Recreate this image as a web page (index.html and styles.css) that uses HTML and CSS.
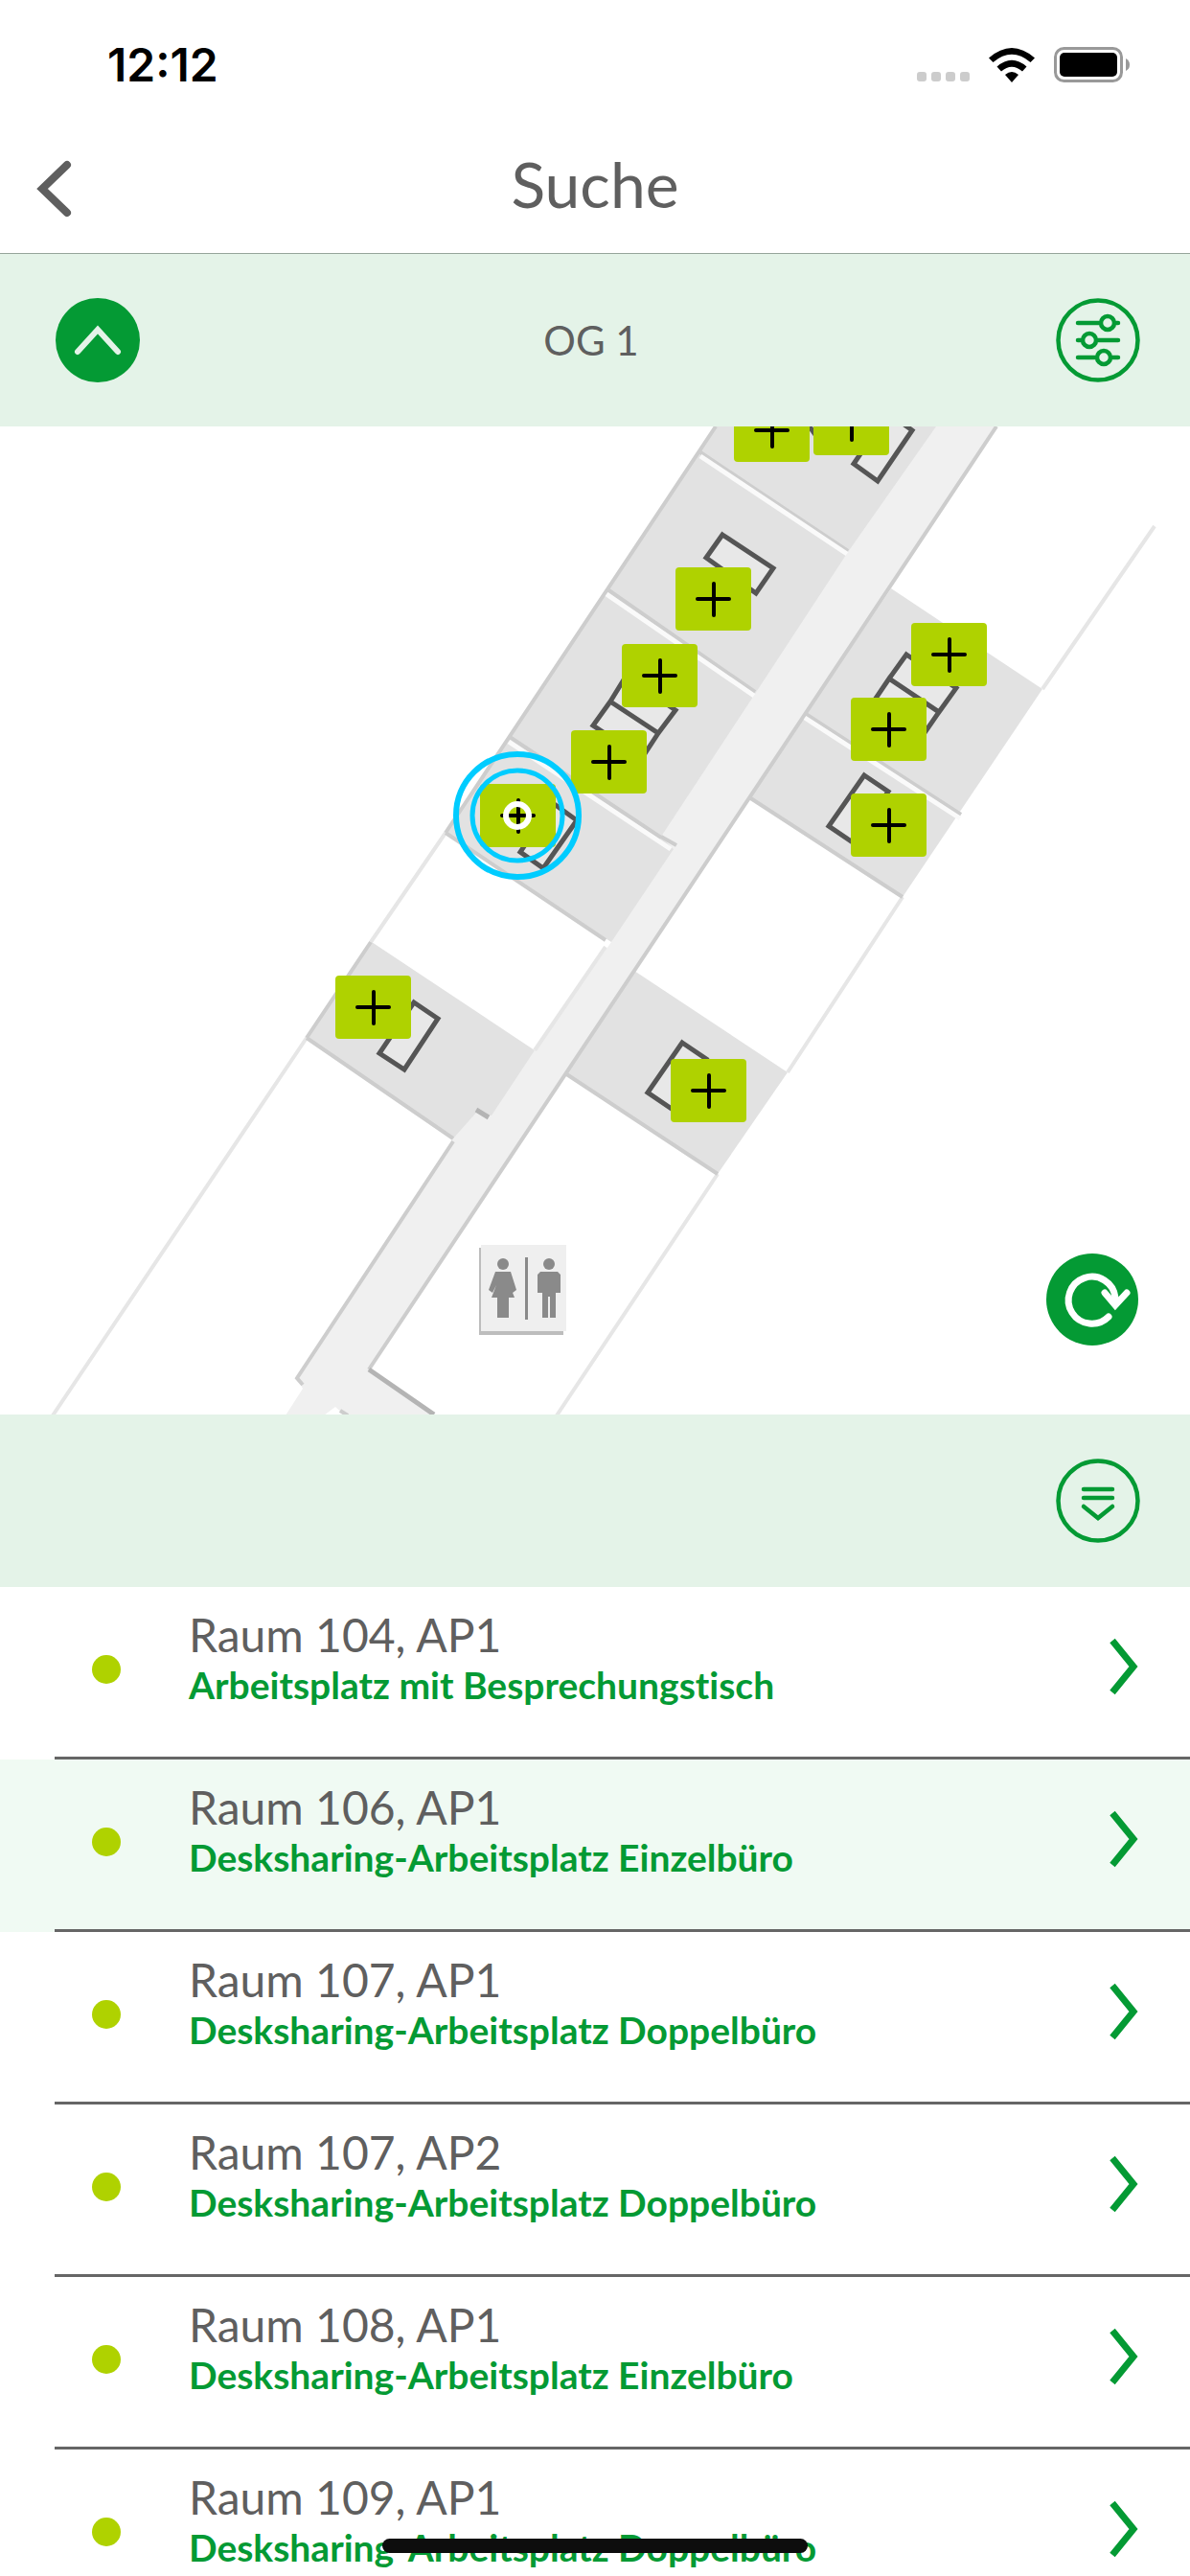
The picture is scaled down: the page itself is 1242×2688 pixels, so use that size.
FILE: index.html
```html
<!DOCTYPE html>
<html lang="de">
<head>
<meta charset="utf-8">
<meta name="viewport" content="width=device-width, initial-scale=1">
<title>Suche</title>
<link rel="stylesheet" href="styles.css">
</head>
<body>
<div class="app">
  <div class="status">
    <span class="status-time">12:12</span>
    <div class="status-icons">
      <div class="signal"><i></i><i></i><i></i><i></i></div>
      <svg class="wifi" width="48" height="37" viewBox="0 0 48 37" aria-hidden="true">
        <path d="M0 10.500Q24-10.500 48 10.500L43.500 15Q24-1.500 4.500 15Z"/>
        <path d="M8.500 19.500Q24 6 39.500 19.500L35 24.500Q24 15 13 24.500Z"/>
        <path d="M17 28Q24 22 31 28L24 36Z"/>
      </svg>
      <svg class="battery" width="80" height="38" viewBox="0 0 80 38" aria-hidden="true">
        <rect x="1.500" y="1.500" width="69" height="34" rx="9" fill="none" stroke="#999" stroke-width="3"/>
        <rect x="6" y="6" width="60" height="25" rx="5"/>
        <path d="M75 12Q79 14 79 18.500T75 25Z" fill="#999"/>
      </svg>
    </div>
  </div>

  <header class="header">
    <button class="back" type="button" aria-label="Zurück">
      <svg width="38" height="62" viewBox="0 0 38 62"><path d="M33 6L7 31L33 56"/></svg>
    </button>
    <h1>Suche</h1>
  </header>

  <div class="bar">
    <button class="round" type="button" aria-label="Etage wechseln">
      <svg width="88" height="88" viewBox="0 0 88 88"><circle cx="44" cy="44" r="44" fill="#049a34"/><path d="M23 56L44 33L65 56" fill="none" stroke="#e4f3e8" stroke-width="6" stroke-linecap="round"/></svg>
    </button>
    <span class="bar-title">OG 1</span>
    <button class="round" type="button" aria-label="Filter">
      <svg width="88" height="88" viewBox="0 0 88 88" fill="none" stroke="#049a34" stroke-width="4.500" stroke-linecap="round">
        <circle cx="44" cy="44" r="41.500"/>
        <path d="M23 26H45M63 26H65M23 44H26M44 44H65M23 62H41M59 62H65"/>
        <circle cx="54" cy="26" r="7"/><circle cx="35" cy="44" r="7"/><circle cx="50" cy="62" r="7"/>
      </svg>
    </button>
  </div>

  <main class="map">
    <svg class="plan" width="1242" height="1032" viewBox="0 444 1242 1032" aria-label="Grundriss">
      <path class="corridor" d="M960 444H1040L385 1428L453 1473V1476H360L350 1467L338 1476H298L316 1448L310 1437L473 1187L480 1150L558 1095L638 982L680 870Z"/>
      <g class="room">
        <path d="M747 444H977L885 575L788 723L690 872L703 885L638 982L465 868Z"/>
        <path d="M388 982L558 1095L513 1163L497 1160L473 1187L320 1082Z"/>
        <path d="M930 613L1088 718L942 935L782 831Z"/>
        <path d="M662 1012L822 1118L749 1224L590 1119Z"/>
      </g>
      <g class="faint">
        <path d="M465 868L387 982M320 1082L55 1476M1205 548L1088 718M942 935L822 1118M749 1224L581 1476"/>
        <path d="M632 987L558 1095"/>
      </g>
      <g class="wall">
        <path d="M747 444L465 868M387 982L320 1082M1040 444L385 1428"/>
        <path d="M465 868L632 980M320 1082L473 1187M782 831L942 935M590 1119L749 1224"/>
        <path d="M473 1190L310 1437L316 1444"/>
        <path d="M690 872L706 881"/>
        <path class="dark" d="M497 1157L510 1165M385 1428L453 1475"/>
        <path d="M355 1471L363 1476"/>
      </g>
      <g class="wall"><path d="M731 471L885 574M634 614L788 721M532 768L690 873M841 744L1003 849"/></g>
      <path class="gap" d="M731 475L884 577M633 619L787 725M531 773L700 885M840 748L1002 853"/>
      <g class="desk">
        <path d="M952 448L916 501L891 483L927 430Z"/>
        <path d="M842 440L852 454"/>
        <path d="M754 557L807 592L789 618L737 581Z"/>
        <path d="M637 731L653 705L705 740L687 764ZM637 731L687 764L670 790L619 756Z"/>
        <path d="M577 837L602 855L567 905L543 888Z"/>
        <path d="M432 1045L457 1062L422 1115L396 1098Z"/>
        <path d="M712 1087L737 1104L701 1156L676 1139Z"/>
        <path d="M946 682L998 717L980 742L928 707ZM928 707L980 742L962 768L911 732Z"/>
        <path d="M902 808L927 825L890 878L865 861Z"/>
      </g>
      <g>
        <path d="M500 1301H588V1392H500Z" fill="#bdbdbd"/>
        <path d="M502 1298H591V1388H502Z" fill="#efefef"/>
        <g fill="#8a8a8a">
          <circle cx="525" cy="1318" r="6"/>
          <path d="M517 1326H533L539 1345L535 1348L532 1340L537 1353H531V1374H519V1353H513L518 1340L514 1348L510 1345Z"/>
          <path d="M548 1311H551V1376H548Z"/>
          <circle cx="573" cy="1318" r="6"/>
          <path d="M564 1326H582L585 1329V1348H580V1374H574V1352H572V1374H566V1348H561V1329Z"/>
        </g>
      </g>
    </svg>

    <button class="pin" type="button" aria-label="Arbeitsplatz" style="left:766px;top:-29px"></button>
    <button class="pin" type="button" aria-label="Arbeitsplatz" style="left:849px;top:-36px"></button>
    <button class="pin" type="button" aria-label="Arbeitsplatz" style="left:705px;top:147px"></button>
    <button class="pin" type="button" aria-label="Arbeitsplatz" style="left:649px;top:227px"></button>
    <button class="pin" type="button" aria-label="Arbeitsplatz" style="left:596px;top:317px"></button>
    <button class="pin" type="button" aria-label="Arbeitsplatz" style="left:350px;top:573px"></button>
    <button class="pin" type="button" aria-label="Arbeitsplatz" style="left:700px;top:660px"></button>
    <button class="pin" type="button" aria-label="Arbeitsplatz" style="left:951px;top:205px"></button>
    <button class="pin" type="button" aria-label="Arbeitsplatz" style="left:888px;top:283px"></button>
    <button class="pin" type="button" aria-label="Arbeitsplatz" style="left:888px;top:383px"></button>
    <button class="pin" type="button" aria-label="Ausgewählter Arbeitsplatz" style="left:501px;top:373px">
      <svg class="target" width="136" height="136" viewBox="0 0 136 136" fill="none">
        <circle cx="68" cy="68" r="64" stroke="#00ccff" stroke-width="6"/>
        <circle cx="68" cy="68" r="47" stroke="#00ccff" stroke-width="5"/>
        <circle cx="68" cy="68" r="12" stroke="#fff" stroke-width="6"/>
      </svg>
    </button>

    <button class="reload" type="button" aria-label="Neu laden">
      <svg width="96" height="96" viewBox="0 0 96 96" fill="none" stroke="#fff" stroke-width="7" stroke-linecap="round">
        <circle cx="48" cy="48" r="48" fill="#049a34" stroke="none"/>
        <path d="M65 66A24.500 24.500 0 1 1 72 46"/>
        <path d="M61 41L72 54L84 41"/>
      </svg>
    </button>
  </main>

  <div class="bar bar-end">
    <button class="round" type="button" aria-label="Liste einklappen">
      <svg width="88" height="88" viewBox="0 0 88 88" fill="none" stroke="#049a34" stroke-width="4.500" stroke-linecap="round">
        <circle cx="44" cy="44" r="41.500"/>
        <path d="M29 32H59M29 41H59M29 50L44 62L59 50"/>
      </svg>
    </button>
  </div>

  <ul class="list">
    <li><a href="#raum-104-1"><span class="dot"></span><span class="text"><span class="name">Raum 104, AP1</span><span class="kind">Arbeitsplatz mit Besprechungstisch</span></span><svg class="go" width="30" height="60" viewBox="0 0 30 60"><path d="M3 3L25 30L3 57"/></svg></a></li>
    <li class="active"><a href="#raum-106-1"><span class="dot"></span><span class="text"><span class="name">Raum 106, AP1</span><span class="kind">Desksharing-Arbeitsplatz Einzelbüro</span></span><svg class="go" width="30" height="60" viewBox="0 0 30 60"><path d="M3 3L25 30L3 57"/></svg></a></li>
    <li><a href="#raum-107-1"><span class="dot"></span><span class="text"><span class="name">Raum 107, AP1</span><span class="kind">Desksharing-Arbeitsplatz Doppelbüro</span></span><svg class="go" width="30" height="60" viewBox="0 0 30 60"><path d="M3 3L25 30L3 57"/></svg></a></li>
    <li><a href="#raum-107-2"><span class="dot"></span><span class="text"><span class="name">Raum 107, AP2</span><span class="kind">Desksharing-Arbeitsplatz Doppelbüro</span></span><svg class="go" width="30" height="60" viewBox="0 0 30 60"><path d="M3 3L25 30L3 57"/></svg></a></li>
    <li><a href="#raum-108-1"><span class="dot"></span><span class="text"><span class="name">Raum 108, AP1</span><span class="kind">Desksharing-Arbeitsplatz Einzelbüro</span></span><svg class="go" width="30" height="60" viewBox="0 0 30 60"><path d="M3 3L25 30L3 57"/></svg></a></li>
    <li><a href="#raum-109-1"><span class="dot"></span><span class="text"><span class="name">Raum 109, AP1</span><span class="kind">Desksharing-Arbeitsplatz Doppelbüro</span></span><svg class="go" width="30" height="60" viewBox="0 0 30 60"><path d="M3 3L25 30L3 57"/></svg></a></li>
  </ul>
  <div class="home"></div>
</div>
</body>
</html>
```
FILE: styles.css
```css
* {
  box-sizing: border-box;
}

body {
  margin: 0;
  background: #fff;
  color: #5f5f5f;
  font-family: Lato, "Liberation Sans", sans-serif;
  font-variant-ligatures: none;
}

button {
  padding: 0;
  border: 0;
  background: none;
  cursor: pointer;
}

svg {
  display: block;
}

.app {
  display: flex;
  flex-direction: column;
  height: 100vh;
  overflow: hidden;
}

.app > * {
  flex-shrink: 0;
}

/* status bar */
.status {
  display: flex;
  justify-content: space-between;
  align-items: center;
  height: 136px;
  padding: 0 62px 0 112px;
}

.status-time {
  color: #000;
  font: 600 48px/56px Inter, "Liberation Sans", sans-serif;
}

.status-icons {
  display: flex;
  align-items: flex-end;
  gap: 20px;
}

.signal {
  display: flex;
  gap: 5px;
  padding-bottom: 2px;
}

.signal i {
  width: 10px;
  height: 10px;
  border-radius: 3px;
  background: #ccc;
}

/* header */
.header {
  display: grid;
  grid-template-columns: 120px 1fr 120px;
  align-items: center;
  height: 129px;
  padding-bottom: 16px;
  border-bottom: 1px solid #96a59b;
}

.header h1 {
  margin: 0;
  font-size: 66px;
  font-weight: 400;
  line-height: 80px;
  text-align: center;
}

.back {
  justify-self: start;
  padding: 10px 37px 0;
}

.back path {
  fill: none;
  stroke: #5f5f5f;
  stroke-width: 8;
  stroke-linecap: round;
}

/* green bars */
.bar {
  display: flex;
  justify-content: space-between;
  align-items: center;
  height: 180px;
  padding: 0 52px 0 58px;
  background: #e4f3e8;
}

.bar-end {
  justify-content: flex-end;
}

.bar-title {
  padding-right: 14px;
  font-size: 42px;
  line-height: 50px;
}

/* floor map */
.map {
  position: relative;
  height: 1031px;
  overflow: hidden;
}

.corridor {
  fill: #f0f0f0;
}

.room {
  fill: #e2e2e2;
}

.faint {
  fill: none;
  stroke: #e6e6e6;
  stroke-width: 4;
}

.wall {
  fill: none;
  stroke: #cdcdcd;
  stroke-width: 4;
}

.wall .dark {
  stroke: #b4b4b4;
  stroke-width: 5;
}

.gap {
  fill: none;
  stroke: #fafafa;
  stroke-width: 5;
}

.desk {
  fill: #e8e8e8;
  stroke: #555;
  stroke-width: 5;
}

.pin {
  position: absolute;
  display: grid;
  place-items: center;
  width: 79px;
  height: 66px;
  border-radius: 4px;
  background: #afd200;
}

.pin::before,
.pin::after {
  content: "";
  grid-area: 1 / 1;
  width: 37px;
  height: 4px;
  border-radius: 2px;
  background: #000;
}

.pin::after {
  width: 4px;
  height: 37px;
}

.target {
  position: absolute;
  left: -29px;
  top: -35px;
}

.reload {
  position: absolute;
  right: 54px;
  bottom: 72px;
}

/* workplace list */
.list {
  flex: 1 1 0;
  min-height: 0;
  margin: 0;
  padding: 0;
  list-style: none;
  overflow-y: auto;
  scrollbar-width: none;
}

.active {
  background: #f0faf3;
}

.list a {
  display: flex;
  align-items: flex-start;
  height: 180px;
  margin-left: 57px;
  padding: 21px 54px 0 39px;
  border-bottom: 3px solid #666;
  color: inherit;
  text-decoration: none;
}

.dot {
  width: 30px;
  height: 30px;
  margin: 50px 71px 0 0;
  border-radius: 50%;
  background: #afd200;
}

.text {
  display: flex;
  flex: 1;
  flex-direction: column;
}

.name {
  font-size: 48px;
  line-height: 58px;
}

.kind {
  color: #049a34;
  font-size: 39px;
  font-weight: 700;
  line-height: 46px;
}

.go {
  margin-top: 32px;
}

.go path {
  fill: none;
  stroke: #049a34;
  stroke-width: 7;
}

/* home indicator */
.home {
  position: fixed;
  bottom: 24px;
  left: 50%;
  width: 444px;
  height: 15px;
  margin-left: -222px;
  border-radius: 8px;
  background: #0d0d0d;
}
```
